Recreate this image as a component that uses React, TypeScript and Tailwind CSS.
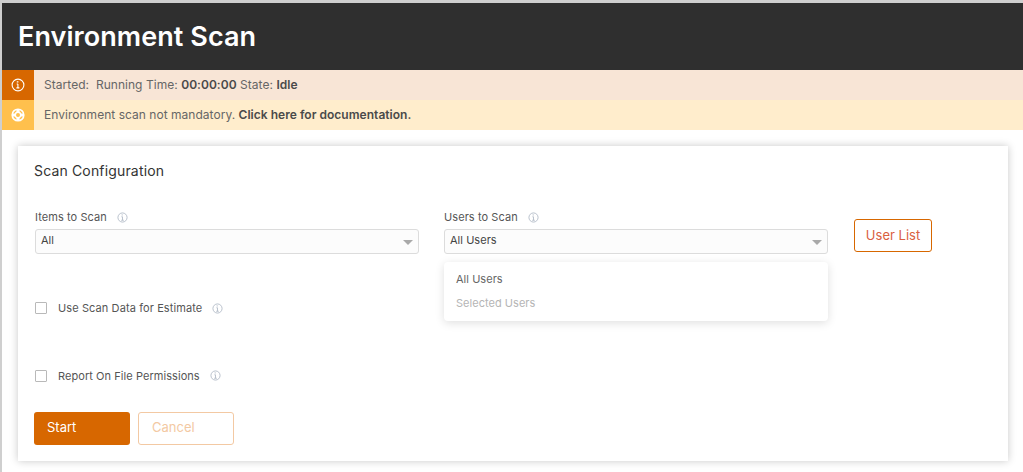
import React from "react";

function Info({ className = "" }: { className?: string }) {
  return (
    <svg width="11" height="11" viewBox="0 0 12 12" fill="none" className={className}>
      <circle cx="6" cy="6" r="5" stroke="#b4bcc8" strokeWidth="1" />
      <path d="M5 3.2h1.4M6 5.2V9M4.8 5.2H6M4.6 9h2.8" stroke="#b4bcc8" strokeWidth="1" />
    </svg>
  );
}

function Check() {
  return <span className="block w-3 h-3 border border-[#b9b9b9] rounded-[1px] bg-white shrink-0" />;
}

function Select({ value }: { value: string }) {
  return (
    <div className="h-[25px] w-full border border-[#dcdcdc] rounded-[3px] bg-[#fcfcfc] flex items-center justify-between pl-[5px] pr-[5px] text-[11px] text-[#444]">
      <span className="-mt-[2px] tracking-[0.03px]">{value}</span>
      <span className="w-0 h-0 border-x-[5px] border-x-transparent border-t-[5px] border-t-[#a9a9a9] mt-[2px]" />
    </div>
  );
}

export default function App() {
  return (
    <div className="w-[1023px] h-[472px] overflow-hidden bg-[#cfcfcf] pt-[3px] pl-[2px] font-['Inter',sans-serif]">
      <div className="h-[469px] bg-white">
        <header className="h-[67px] bg-[#2f2f2f] flex items-center pl-4">
          <h1 className="text-[27px] font-semibold text-white leading-none tracking-[0.06px]">Environment Scan</h1>
        </header>
        <div className="h-[30px] flex bg-[#f8e5d6] text-[12px] text-[#666] tracking-[0.04px]">
          <div className="w-8 bg-[#d76700] flex items-center justify-center">
            <svg width="14" height="14" viewBox="0 0 14 14" fill="none">
              <circle cx="7" cy="7" r="5.9" stroke="#fff" strokeWidth="1.1" />
              <path d="M5.8 3.9h1.6M6.9 6v3.8M5.7 6h1.2M5.4 9.9h3" stroke="#fff" strokeWidth="1.1" />
            </svg>
          </div>
          <div className="pl-[10px] flex items-center whitespace-pre">
            Started:  Running Time: <b className="font-semibold text-[#4a4a4a]">00:00:00</b> State: <b className="font-semibold text-[#4a4a4a]">Idle</b>
          </div>
        </div>
        <div className="h-[30px] flex bg-[#ffedcc] text-[12px] text-[#666] tracking-[0.03px]">
          <div className="w-8 bg-[#ffc04d] flex items-center justify-center">
            <svg width="14" height="14" viewBox="0 0 14 14" fill="none">
              <circle cx="7" cy="7" r="5.8" stroke="#fff" strokeWidth="1.6" />
              <circle cx="7" cy="7" r="2.7" stroke="#fff" strokeWidth="1.4" />
              <path d="M7 1.5v3.5M7 9v3.5M1.5 7H5M9 7h3.5" stroke="#fff" strokeWidth="3.2" />
            </svg>
          </div>
          <div className="pl-[10px] flex items-center whitespace-pre">
            Environment scan not mandatory. <b className="font-semibold text-[#4a4a4a]">Click here for documentation.</b>
          </div>
        </div>
        <section className="mt-4 ml-4 w-[990px] h-[315px] bg-white shadow-[0_0_8px_rgba(0,0,0,0.22)] pl-4 pt-[16px]">
          <h2 className="text-[14px] leading-[18px] text-[#333] tracking-[0.16px]">Scan Configuration</h2>
          <div className="mt-[29px] flex">
            <div className="w-[384px] ml-px">
              <div className="h-[17px] flex items-center gap-[10px] text-[11px] text-[#555] tracking-[0.08px]">
                <span>Items to Scan</span>
                <Info />
              </div>
              <div className="mt-[3px]"><Select value="All" /></div>
            </div>
            <div className="w-[384px] ml-[25px] relative">
              <div className="h-[17px] flex items-center gap-[10px] text-[11px] text-[#555] tracking-[0.08px]">
                <span>Users to Scan</span>
                <Info />
              </div>
              <div className="mt-[3px]"><Select value="All Users" /></div>
              <div className="absolute left-0 right-0 top-[53px] h-[59px] bg-white rounded-[4px] shadow-[0_2px_10px_rgba(0,0,0,0.13)] pl-3 pt-[5px] text-[11px] leading-[24px] z-10 tracking-[0.03px]">
                <div className="text-[#666]">All Users</div>
                <div className="text-[#b5b5b5]">Selected Users</div>
              </div>
            </div>
            <button className="ml-[26px] mt-[10px] w-[78px] h-[33px] border border-[#d76700] rounded-[3px] text-[13px] text-[#d9603f] bg-white">
              User List
            </button>
          </div>
          <div className="mt-[46px] flex items-center ml-px h-4">
            <Check />
            <span className="ml-[11px] text-[11px] text-[#555] tracking-[0.1px]">Use Scan Data for Estimate</span>
            <Info className="ml-[10px]" />
          </div>
          <div className="mt-[52px] flex items-center ml-px h-4">
            <Check />
            <span className="ml-[11px] text-[11px] text-[#555] tracking-[0.06px]">Report On File Permissions</span>
            <Info className="ml-[10px] -mt-[2px]" />
          </div>
          <div className="mt-[28px] flex gap-2">
            <button className="w-[96px] h-[33px] bg-[#d76700] rounded-[3px] text-white text-[13px] text-left pl-[13px] pb-[2px]">Start</button>
            <button className="w-[96px] h-[33px] border border-[#f3c9a3] rounded-[3px] text-[#f3c9a3] text-[13px] text-left pl-[13px] pb-[2px] bg-white">Cancel</button>
          </div>
        </section>
      </div>
    </div>
  );
}
